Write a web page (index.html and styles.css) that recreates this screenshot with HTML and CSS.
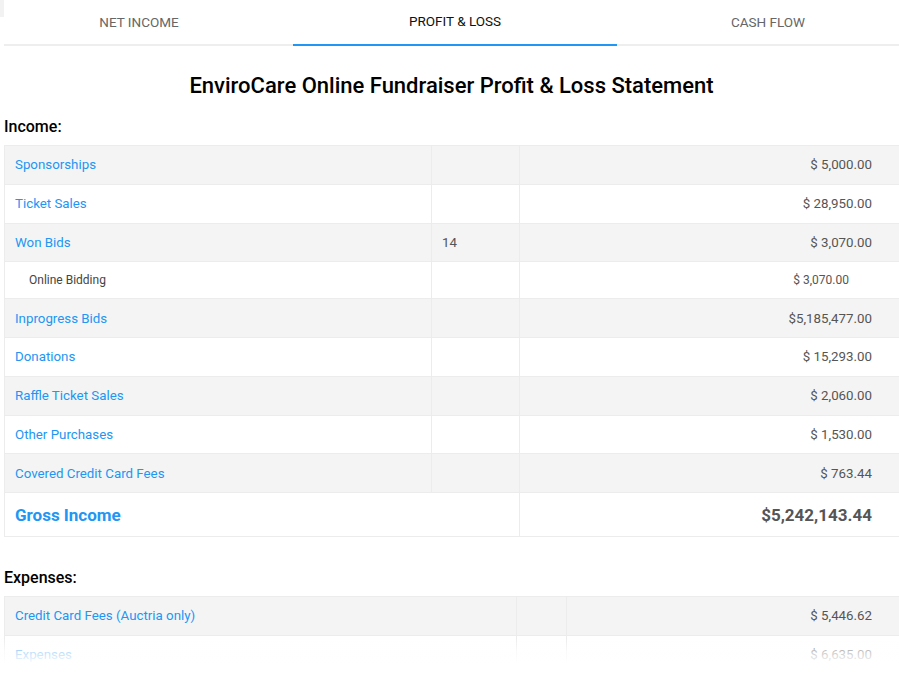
FILE: index.html
```html
<!DOCTYPE html>
<html>
<head>
<meta charset="utf-8">
<link rel="stylesheet" href="styles.css">
</head>
<body>
<div class="edge"></div>
<div class="page">
  <div class="tabs">
    <div class="tab tab-first">NET INCOME</div>
    <div class="tab tab-active">PROFIT &amp; LOSS</div>
    <div class="tab tab-last">CASH FLOW</div>
  </div>
  <h1 class="title">EnviroCare Online Fundraiser Profit &amp; Loss Statement</h1>
  <h2 class="section">Income:</h2>
  <table class="pl income">
    <colgroup><col class="c1"><col class="c2"><col></colgroup>
    <tr class="odd"><td class="lbl">Sponsorships</td><td></td><td class="amt">$ 5,000.00</td></tr>
    <tr><td class="lbl">Ticket Sales</td><td></td><td class="amt">$ 28,950.00</td></tr>
    <tr class="odd"><td class="lbl">Won Bids</td><td class="num">14</td><td class="amt">$ 3,070.00</td></tr>
    <tr class="sub"><td class="sublbl">Online Bidding</td><td></td><td class="subamt">$ 3,070.00</td></tr>
    <tr class="odd"><td class="lbl">Inprogress Bids</td><td></td><td class="amt">$5,185,477.00</td></tr>
    <tr><td class="lbl">Donations</td><td></td><td class="amt">$ 15,293.00</td></tr>
    <tr class="odd"><td class="lbl">Raffle Ticket Sales</td><td></td><td class="amt">$ 2,060.00</td></tr>
    <tr><td class="lbl">Other Purchases</td><td></td><td class="amt">$ 1,530.00</td></tr>
    <tr class="odd"><td class="lbl">Covered Credit Card Fees</td><td></td><td class="amt">$ 763.44</td></tr>
    <tr class="total"><td class="lbl" colspan="2">Gross Income</td><td class="amt">$5,242,143.44</td></tr>
  </table>
  <h2 class="section section-exp">Expenses:</h2>
  <table class="pl expenses">
    <colgroup><col class="e1"><col class="e2"><col></colgroup>
    <tr class="odd"><td class="lbl">Credit Card Fees (Auctria only)</td><td></td><td class="amt">$ 5,446.62</td></tr>
    <tr><td class="lbl">Expenses</td><td></td><td class="amt">$ 6,635.00</td></tr>
  </table>
</div>
<div class="fade"></div>
</body>
</html>
```
FILE: styles.css
```css
html, body {
  margin: 0;
  padding: 0;
  background: #fff;
  overflow: hidden;
  height: 674px;
}
body {
  font-family: Roboto, "Liberation Sans", Arial, sans-serif;
  color: #222;
}
.edge {
  position: absolute;
  left: 0;
  top: 0;
  width: 4px;
  height: 17px;
  background: #f2f2f2;
}
.page {
  margin-left: 4px;
  width: 915px;
}
.tabs {
  display: flex;
  width: 915px;
  height: 44px;
  border-bottom: 2px solid #eeeeee;
}
.tab {
  font-size: 13.5px;
  font-weight: 400;
  color: #666;
  display: flex;
  align-items: center;
  justify-content: center;
  height: 44px;
  box-sizing: border-box;
}
.tab-first {
  width: 289px;
  padding-right: 19px;
}
.tab-active {
  width: 324px;
  color: #111;
  border-bottom: 2px solid #2196f3;
  height: 46px;
  padding-bottom: 2px;
}
.tab-last {
  flex: 1;
}
.title {
  margin: 28px 0 0;
  width: 895px;
  text-align: center;
  font-size: 22px;
  font-weight: 500;
  line-height: 24px;
  color: #000;
}
.section {
  margin: 19px 0 0;
  font-size: 16px;
  font-weight: 500;
  line-height: 20px;
  color: #000;
}
.section-exp {
  margin-top: 31px;
}
.pl {
  width: 900px;
  border-collapse: collapse;
  margin-top: 8px;
  table-layout: fixed;
}
.c1 { width: 427px; }
.c2 { width: 88px; }
.e1 { width: 512px; }
.e2 { width: 50px; }
.pl td {
  border: 1px solid #ececec;
  height: 38.75px;
  padding: 0 10px;
  font-size: 13.3px;
  color: #555;
  box-sizing: border-box;
}
.pl tr.odd td {
  background: #f4f4f4;
}
.pl td.lbl {
  color: #2196f3;
}
.pl td.num {
  color: #555;
}
.pl td.amt {
  text-align: right;
  padding-right: 31px;
}
.pl tr.sub td {
  height: 37px;
}
.pl td.sublbl {
  font-size: 12px;
  color: #444;
  padding-left: 24px;
}
.pl td.subamt {
  font-size: 12px;
  text-align: right;
  padding-right: 54px;
}
.pl tr.total td {
  height: 44px;
  font-size: 17px;
  font-weight: 700;
}
.fade {
  position: fixed;
  left: 0;
  right: 0;
  top: 638px;
  height: 36px;
  background: linear-gradient(to bottom, rgba(255,255,255,0) 0%, rgba(255,255,255,0.7) 40%, #fff 75%);
}
```
